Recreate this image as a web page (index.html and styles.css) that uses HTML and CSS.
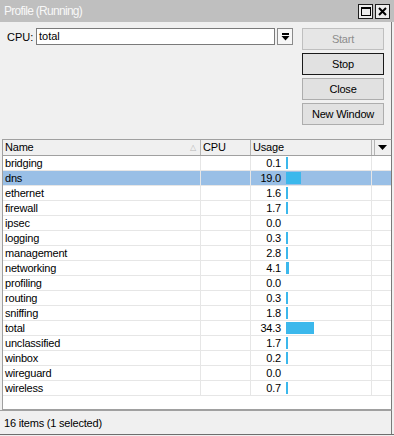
FILE: index.html
```html
<!DOCTYPE html>
<html lang="en">
<head>
    <meta charset="UTF-8">
    <title>Profile (Running)</title>
    <link rel="stylesheet" href="styles.css">
</head>
<body>
    <div class="window">
        <div class="titlebar">
            <span class="title">Profile (Running)</span>
            <div class="win-buttons">
                <span class="win-btn"><svg width="10" height="9" viewBox="0 0 10 9"><rect x="0.5" y="0.5" width="9" height="8" fill="none" stroke="#000"/><rect x="0" y="0" width="10" height="2" fill="#000"/></svg></span>
                <span class="win-btn"><svg width="9" height="9" viewBox="0 0 9 9"><path d="M1 1 L8 8 M8 1 L1 8" stroke="#000" stroke-width="2"/></svg></span>
            </div>
        </div>

        <div class="top">
            <div class="form-row">
                <label class="cpu-label">CPU:</label>
                <div class="select-box">total</div>
                <div class="drop-btn">
                    <svg width="9" height="8" viewBox="0 0 9 8"><rect x="1" y="0" width="7" height="2" fill="#000"/><path d="M0.5 3 L8.5 3 L4.5 7.5 Z" fill="#000"/></svg>
                </div>
            </div>
            <div class="actions">
                <button class="btn disabled">Start</button>
                <button class="btn focused">Stop</button>
                <button class="btn">Close</button>
                <button class="btn">New Window</button>
            </div>
        </div>

        <div class="table">
            <div class="thead">
                <div class="th name">Name<span class="sort">&#9651;</span></div>
                <div class="th cpu">CPU</div>
                <div class="th usage">Usage</div>
                <div class="th spacer"></div>
                <div class="th menu"><svg width="9" height="5" viewBox="0 0 9 5"><path d="M0 0 L9 0 L4.5 5 Z" fill="#000"/></svg></div>
            </div>
            <div class="tbody">
                <div class="tr"><div class="td name">bridging</div><div class="td cpu"></div><div class="td usage"><span class="val">0.1</span><span class="bar" style="width:2px"></span></div><div class="td fill"></div></div>
                <div class="tr selected"><div class="td name">dns</div><div class="td cpu"></div><div class="td usage"><span class="val">19.0</span><span class="bar" style="width:15px"></span></div><div class="td fill"></div></div>
                <div class="tr"><div class="td name">ethernet</div><div class="td cpu"></div><div class="td usage"><span class="val">1.6</span><span class="bar" style="width:2px"></span></div><div class="td fill"></div></div>
                <div class="tr"><div class="td name">firewall</div><div class="td cpu"></div><div class="td usage"><span class="val">1.7</span><span class="bar" style="width:2px"></span></div><div class="td fill"></div></div>
                <div class="tr"><div class="td name">ipsec</div><div class="td cpu"></div><div class="td usage"><span class="val">0.0</span></div><div class="td fill"></div></div>
                <div class="tr"><div class="td name">logging</div><div class="td cpu"></div><div class="td usage"><span class="val">0.3</span><span class="bar" style="width:2px"></span></div><div class="td fill"></div></div>
                <div class="tr"><div class="td name">management</div><div class="td cpu"></div><div class="td usage"><span class="val">2.8</span><span class="bar" style="width:2px"></span></div><div class="td fill"></div></div>
                <div class="tr"><div class="td name">networking</div><div class="td cpu"></div><div class="td usage"><span class="val">4.1</span><span class="bar" style="width:3px"></span></div><div class="td fill"></div></div>
                <div class="tr"><div class="td name">profiling</div><div class="td cpu"></div><div class="td usage"><span class="val">0.0</span></div><div class="td fill"></div></div>
                <div class="tr"><div class="td name">routing</div><div class="td cpu"></div><div class="td usage"><span class="val">0.3</span><span class="bar" style="width:2px"></span></div><div class="td fill"></div></div>
                <div class="tr"><div class="td name">sniffing</div><div class="td cpu"></div><div class="td usage"><span class="val">1.8</span><span class="bar" style="width:2px"></span></div><div class="td fill"></div></div>
                <div class="tr"><div class="td name">total</div><div class="td cpu"></div><div class="td usage"><span class="val">34.3</span><span class="bar" style="width:28px"></span></div><div class="td fill"></div></div>
                <div class="tr"><div class="td name">unclassified</div><div class="td cpu"></div><div class="td usage"><span class="val">1.7</span><span class="bar" style="width:2px"></span></div><div class="td fill"></div></div>
                <div class="tr"><div class="td name">winbox</div><div class="td cpu"></div><div class="td usage"><span class="val">0.2</span><span class="bar" style="width:2px"></span></div><div class="td fill"></div></div>
                <div class="tr"><div class="td name">wireguard</div><div class="td cpu"></div><div class="td usage"><span class="val">0.0</span></div><div class="td fill"></div></div>
                <div class="tr"><div class="td name">wireless</div><div class="td cpu"></div><div class="td usage"><span class="val">0.7</span><span class="bar" style="width:2px"></span></div><div class="td fill"></div></div>
            </div>
        </div>

        <div class="statusbar">16 items (1 selected)</div>
    </div>
</body>
</html>
```

FILE: styles.css
```css
* {
    box-sizing: border-box;
    margin: 0;
    padding: 0;
}
body {
    font-family: 'Liberation Sans', Arial, sans-serif;
    font-size: 11px;
    color: #000000;
    background-color: #f0f0f0;
    width: 394px;
    height: 436px;
    overflow: hidden;
}
.window {
    width: 394px;
    height: 435px;
    display: flex;
    flex-direction: column;
    border-bottom: 1px solid #6e6e6e;
}
.titlebar {
    height: 22px;
    background-color: #bfbfbf;
    display: flex;
    align-items: center;
    justify-content: space-between;
    padding: 0 4px 0 4px;
}
.title {
    color: #f8f8f8;
    font-size: 12px;
    letter-spacing: -0.7px;
}
.win-buttons {
    display: flex;
    gap: 2px;
    margin-top: 1px;
}
.win-btn {
    width: 15px;
    height: 15px;
    background-color: #ececec;
    border: 1px solid #1e1e1e;
    display: flex;
    align-items: center;
    justify-content: center;
}

.top {
    height: 117px;
    display: flex;
    justify-content: space-between;
    padding: 6px 0 0 7px;
    border-right: 1px solid #7a7a7a;
    margin-right: 2px;
}
.form-row {
    display: flex;
    align-items: center;
    height: 17px;
}
.cpu-label {
    width: 29px;
    font-size: 11px;
}
.select-box {
    width: 239px;
    height: 17px;
    background-color: #ffffff;
    border: 1px solid #7a7a7a;
    padding: 1px 2px;
    font-size: 11px;
    line-height: 13px;
}
.drop-btn {
    width: 16px;
    height: 17px;
    margin-left: 2px;
    background-color: #f7f7f7;
    border: 1px solid #8a8a8a;
    display: flex;
    align-items: center;
    justify-content: center;
}
.actions {
    display: flex;
    flex-direction: column;
    gap: 3px;
    width: 82px;
    margin-right: 7px;
}
.btn {
    height: 22px;
    font-family: 'Liberation Sans', Arial, sans-serif;
    font-size: 11px;
    letter-spacing: -0.2px;
    background-color: #e1e1e1;
    border: 1px solid #adadad;
    color: #000000;
}
.btn.disabled {
    color: #8d8d8d;
    background-color: #e6e6e6;
    border-color: #bfbfbf;
}
.btn.focused {
    border-color: #1a1a1a;
}

.table {
    flex: 1;
    margin: 0 2px 0 2px;
    background-color: #ffffff;
    border: 1px solid #a0a0a0;
    border-right-color: #7a7a7a;
}
.thead {
    display: flex;
    height: 16px;
    background-color: #f0f0f0;
    border-bottom: 1px solid #a0a0a0;
}
.th {
    height: 15px;
    line-height: 15px;
    padding-left: 2px;
    border-right: 1px solid #b4b4b4;
    font-size: 11px;
    letter-spacing: -0.2px;
    position: relative;
}
.name { width: 198px; }
.cpu { width: 50px; }
.usage { width: 121px; }
.th.spacer { width: 3px; padding: 0; }
.th.menu {
    width: 15px;
    border-right: none;
    display: flex;
    align-items: center;
    justify-content: center;
    padding: 0;
}
.sort {
    position: absolute;
    right: 4px;
    top: 0;
    font-size: 8px;
    color: #b8b8b8;
}
.tr {
    display: flex;
    height: 15px;
    border-bottom: 1px solid #e6e6e6;
}
.tr.selected {
    background-color: #99bfe6;
}
.td {
    height: 14px;
    line-height: 14px;
    border-right: 1px solid #e6e6e6;
    font-size: 11px;
    letter-spacing: -0.2px;
    white-space: nowrap;
}
.td.name { padding-left: 2px; }
.td.usage {
    display: flex;
    align-items: center;
}
.val {
    width: 30px;
    text-align: right;
}
.bar {
    height: 12px;
    margin-left: 5px;
    background-color: #3bb8ec;
}
.td.fill {
    flex: 1;
    border-right: none;
}

.statusbar {
    height: 24px;
    line-height: 24px;
    padding-left: 4px;
    font-size: 11px;
    letter-spacing: -0.2px;
    border-top: 1px solid #a0a0a0;
    border-right: 1px solid #7a7a7a;
    margin-right: 2px;
}
```
